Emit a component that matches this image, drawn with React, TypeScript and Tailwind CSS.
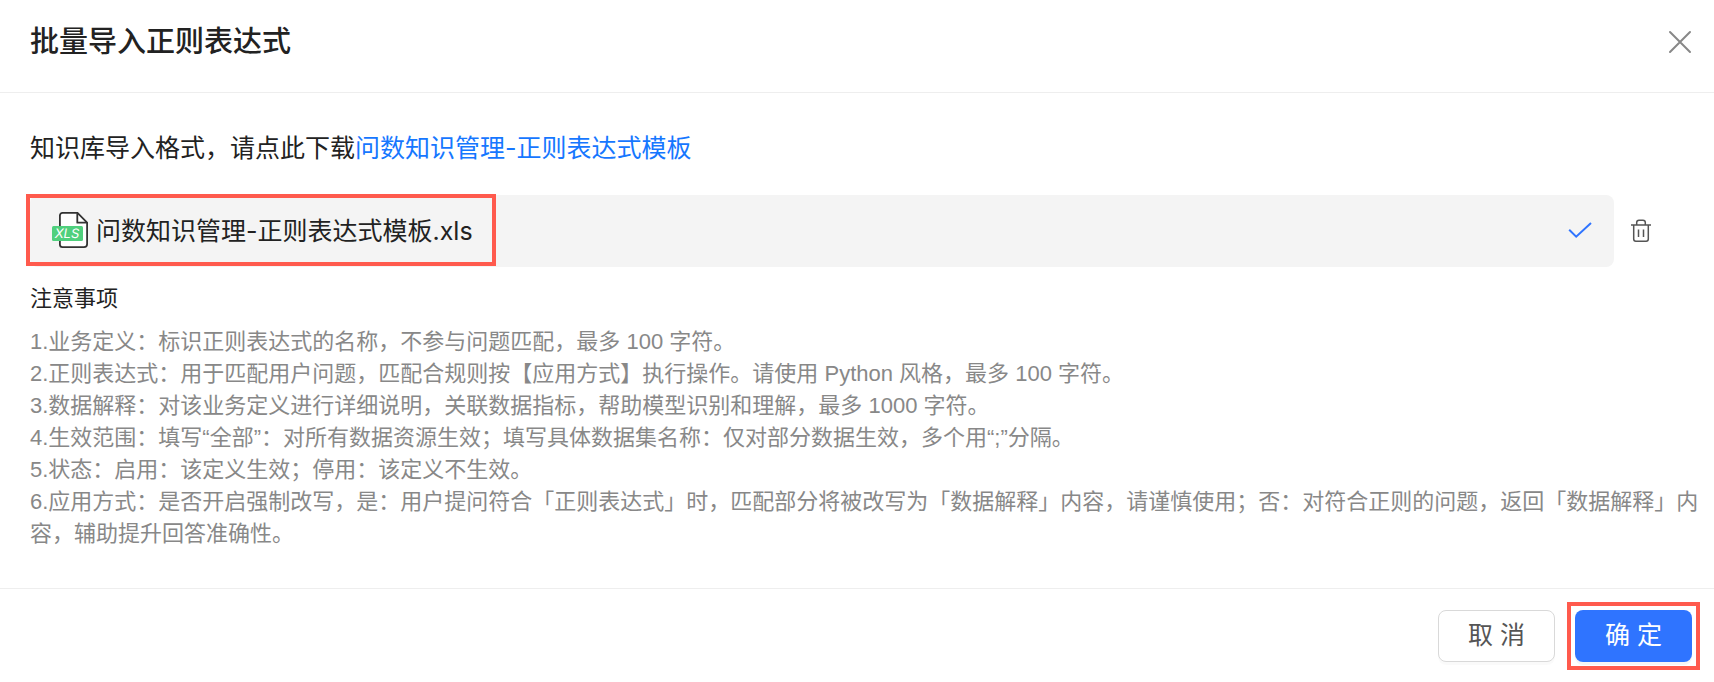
import React from 'react';

const notes = [
    '1.业务定义：标识正则表达式的名称，不参与问题匹配，最多 100 字符。',
    '2.正则表达式：用于匹配用户问题，匹配合规则按【应用方式】执行操作。请使用 Python 风格，最多 100 字符。',
    '3.数据解释：对该业务定义进行详细说明，关联数据指标，帮助模型识别和理解，最多 1000 字符。',
    '4.生效范围：填写“全部”：对所有数据资源生效；填写具体数据集名称：仅对部分数据生效，多个用“;”分隔。',
    '5.状态：启用：该定义生效；停用：该定义不生效。',
    '6.应用方式：是否开启强制改写，是：用户提问符合「正则表达式」时，匹配部分将被改写为「数据解释」内容，请谨慎使用；否：对符合正则的问题，返回「数据解释」内容，辅助提升回答准确性。',
];

const CloseIcon = () => (
    <svg width="24" height="24" viewBox="0 0 24 24" fill="none" stroke="#888888" strokeWidth="2" strokeLinecap="round" aria-hidden="true">
        <path d="M2 2L22 22M22 2L2 22" />
    </svg>
);

const XlsIcon = () => (
    <svg width="36" height="38" viewBox="0 0 36 38" fill="none" aria-hidden="true">
        <path d="M10.5 0.9H25.5L35.1 10.5V32C35.1 33.8 33.8 35.1 32 35.1H10.5C9 35.1 7.9 34 7.9 32.5V3.5C7.9 2 9 0.9 10.5 0.9Z" fill="#fff" stroke="#333" strokeWidth="1.8" />
        <path d="M25.3 1.2V10.7H34.8" stroke="#333" strokeWidth="1.8" strokeLinejoin="round" />
        <rect x="0" y="14" width="31" height="15" rx="1.5" fill="#4fd07d" />
        <text x="15" y="26.3" textAnchor="middle" fill="#fff" fontSize="13" fontWeight="400" fontStyle="italic" fontFamily="Inter, sans-serif" textRendering="geometricPrecision">XLS</text>
    </svg>
);

const CheckIcon = () => (
    <svg width="24" height="24" viewBox="0 0 24 24" fill="none" stroke="#2f74ff" strokeWidth="2" aria-hidden="true">
        <path d="M1.2 10.7L8.2 17.7L23 4" />
    </svg>
);

const TrashIcon = () => (
    <svg width="22" height="24" viewBox="0 0 22 24" fill="none" stroke="#555555" strokeWidth="1.5" aria-hidden="true">
        <path d="M1 6H21M3.7 6V20C3.7 21.4 4.5 22.2 5.8 22.2H16.2C17.5 22.2 18.3 21.4 18.3 20V6M6.7 6V3.5C6.7 2 7.5 1.2 9 1.2H13C14.5 1.2 15.3 2 15.3 3.5V6M8.5 10.5V18M13.5 10.5V18" />
    </svg>
);

const App = () => {
    return (
        <div role="dialog" aria-labelledby="dialog-title" className="w-full bg-white font-['Liberation_Sans','Noto_Sans_CJK_SC',sans-serif] text-[#222222]">
            <header className="flex items-center justify-between border-b border-[#eeeeee] pt-6 pr-[22px] pb-8 pl-[30px]">
                <h1 id="dialog-title" className="text-[29px] leading-9 font-medium">批量导入正则表达式</h1>
                <button type="button" aria-label="关闭">
                    <CloseIcon />
                </button>
            </header>

            <main className="pt-9 pr-2 pb-[38px] pl-[30px]">
                <p className="font-['Inter','Noto_Sans_CJK_SC',sans-serif] text-[25px] leading-[38px]">
                    知识库导入格式，请点此下载<a href="#template" className="text-[#1677ff]">问数知识管理-正则表达式模板</a>
                </p>

                <div className="mt-7 flex items-center gap-4 pr-[54px]">
                    <div className="flex h-[72px] flex-1 items-center justify-between rounded-lg bg-[#f4f4f4] pr-[22px]">
                        <div className="relative flex h-full items-center gap-2 px-[22px]">
                            <XlsIcon />
                            <span className="font-['Inter','Noto_Sans_CJK_SC',sans-serif] text-[25px] leading-[38px]">问数知识管理-正则表达式模板.xls</span>
                            <div className="pointer-events-none absolute -top-px -right-px bottom-px -left-1 border-4 border-[#ff5a4d]"></div>
                        </div>
                        <CheckIcon />
                    </div>
                    <button type="button" aria-label="删除">
                        <TrashIcon />
                    </button>
                </div>

                <h2 className="mt-[17px] text-[22px] leading-[30px]">注意事项</h2>
                <div className="mt-3 text-[22px] leading-8 text-[#888888]">
                    {notes.map((note) => (
                        <p key={note}>{note}</p>
                    ))}
                </div>
            </main>

            <footer className="flex items-center justify-end gap-3 border-t border-[#eeeeee] pt-[13px] pr-[14px] pb-3">
                <button type="button" className="h-[52px] w-[117px] rounded-lg border border-[#d9d9d9] bg-white text-[25px] text-[#555555] shadow-[0_3px_0_rgba(0,0,0,0.02)]">
                    取 消
                </button>
                <div className="border-4 border-[#ff5a4d] p-1">
                    <button type="button" className="h-[52px] w-[117px] rounded-lg bg-[#2f74ff] text-[25px] text-white shadow-[0_3px_0_rgba(0,0,0,0.04)]">
                        确 定
                    </button>
                </div>
            </footer>
        </div>
    );
};

export default App;
